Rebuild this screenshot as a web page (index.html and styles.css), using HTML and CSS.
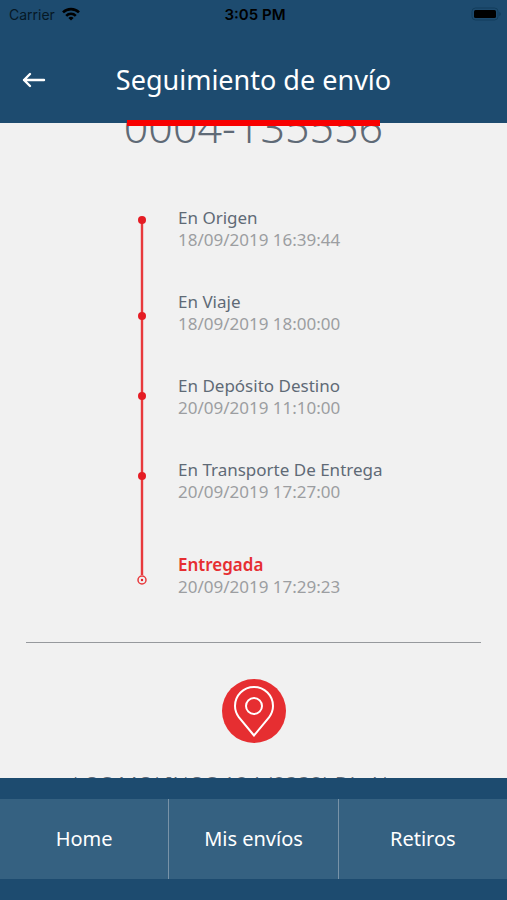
FILE: index.html
```html
<!DOCTYPE html>
<html lang="es">
<head>
<meta charset="utf-8">
<meta name="viewport" content="width=device-width, initial-scale=1">
<title>Seguimiento de envío</title>
<link rel="stylesheet" href="styles.css">
</head>
<body>
<header class="top">
  <div class="status">
    <span class="carrier">Carrier
      <svg width="18" height="14" viewBox="0 0 18 14" aria-hidden="true"><g fill="none" stroke="#000" stroke-width="2.6"><path d="M1 5.4a11.3 11.3 0 0 1 16 0"/><path d="M4.2 8.8a6.8 6.8 0 0 1 9.6 0"/></g><path d="M9 13.6 6.4 11a3.7 3.7 0 0 1 5.2 0z"/></svg>
    </span>
    <span class="clock">3:05 PM</span>
    <svg class="battery" width="30" height="14" viewBox="0 0 30 14" aria-hidden="true"><rect x="1" y="1" width="26" height="12" rx="3.5" fill="none" stroke="#123d5c"/><rect x="3" y="3" width="22" height="8" rx="1.5"/><path d="M28.3 5v4q1.5-.6 1.5-2t-1.5-2" fill="#123d5c"/></svg>
  </div>
  <div class="bar">
    <button class="back" type="button" aria-label="Volver">
      <svg width="24" height="16" viewBox="0 0 24 16" fill="none" stroke="#fff" stroke-width="2.4" stroke-linecap="round" stroke-linejoin="round"><path d="M22 8H2M8 2 2 8l6 6"/></svg>
    </button>
    <h1>Seguimiento de envío</h1>
  </div>
  <div class="marker"></div>
</header>
<main>
  <p class="number">0004-135556</p>
  <section class="tracking">
    <svg class="rail" width="12" height="372" viewBox="0 0 12 372" aria-hidden="true"><path d="M6 4v356" stroke="#e8393c" stroke-width="2.4"/><g fill="#e51c24"><circle cx="6" cy="5" r="4"/><circle cx="6" cy="101" r="4"/><circle cx="6" cy="181" r="4"/><circle cx="6" cy="261" r="4"/><circle cx="6" cy="365" r="1.2"/></g><circle cx="6" cy="365" r="4" fill="none" stroke="#e8393c" stroke-width="1.5"/></svg>
    <ol>
      <li><strong>En Origen</strong><time>18/09/2019 16:39:44</time></li>
      <li><strong>En Viaje</strong><time>18/09/2019 18:00:00</time></li>
      <li><strong>En Depósito Destino</strong><time>20/09/2019 11:10:00</time></li>
      <li><strong>En Transporte De Entrega</strong><time>20/09/2019 17:27:00</time></li>
      <li class="done"><strong>Entregada</strong><time>20/09/2019 17:29:23</time></li>
    </ol>
  </section>
  <hr>
  <section class="place">
    <svg width="64" height="64" viewBox="0 0 64 64" aria-hidden="true"><circle cx="32" cy="32" r="32" fill="#e62e31"/><g fill="none" stroke="#fff" stroke-width="2"><path d="M32 56.5 17 38.5C14.5 35 13 31.5 13 27a19 19 0 0 1 38 0c0 4.5-1.5 8-4 11.5z"/><circle cx="32" cy="27" r="8"/></g></svg>
    <p>LOS MOLINOS 124 (8332) Río Negro</p>
  </section>
</main>
<nav>
  <a href="#home">Home</a>
  <a href="#envios">Mis envíos</a>
  <a href="#retiros">Retiros</a>
</nav>
</body>
</html>
```

FILE: styles.css
```css
* { box-sizing: border-box; margin: 0; padding: 0; }
body {
  display: flex;
  flex-direction: column;
  height: 100vh;
  background: #f1f1f1;
  color: #5f6a76;
  font-family: "Noto Sans", sans-serif;
}
.top {
  position: relative;
  flex: none;
  padding-bottom: 23px;
  background: #1d4b6f;
}
.status {
  display: grid;
  grid-template-columns: 1fr auto 1fr;
  align-items: center;
  height: 28px;
  padding: 0 6px 0 9px;
  color: #000;
  font-family: Inter, sans-serif;
  font-size: 14px;
}
.carrier { display: flex; align-items: center; gap: 7px; color: #061825; }
.clock { font-size: 15px; font-weight: 600; }
.battery { justify-self: end; }
.bar {
  display: grid;
  grid-template-columns: 48px 1fr 48px;
  align-items: center;
  height: 72px;
  padding: 32px 10px 0;
}
.back {
  display: flex;
  justify-content: center;
  border: 0;
  background: none;
  cursor: pointer;
}
h1 {
  color: #fff;
  font-size: 27px;
  font-weight: 400;
  line-height: 40px;
  text-align: center;
}
.marker {
  position: absolute;
  bottom: -3px;
  left: 25%;
  width: 50%;
  height: 6px;
  background: #f80000;
}
main { flex: 1; min-height: 0; overflow: hidden; }
.number {
  margin-top: -27px;
  font-size: 43px;
  font-weight: 300;
  line-height: 62px;
  text-align: center;
}
.tracking {
  display: flex;
  align-items: flex-start;
  gap: 30px;
  margin-top: 49px;
  padding-left: 136px;
}
.rail { flex: none; margin-top: 8px; }
ol { list-style: none; }
li {
  display: flex;
  flex-direction: column;
  height: 84px;
  font-size: 17px;
  line-height: 22px;
}
li strong { font-weight: 400; }
li time { color: #9c9ea1; }
li.done { margin-top: 11px; }
.done strong { color: #e62e31; font-weight: 600; }
hr { margin: 4px 26px 0; border: 0; border-top: 1px solid #96999d; }
.place {
  display: flex;
  flex-direction: column;
  align-items: center;
  gap: 26px;
  padding-top: 36px;
}
.place p { font-size: 22px; font-weight: 300; line-height: 30px; white-space: nowrap; }
nav {
  display: flex;
  flex: none;
  padding: 21px 0;
  background: #1d4b6f;
}
nav a {
  display: flex;
  flex: 1;
  align-items: center;
  justify-content: center;
  height: 80px;
  padding-bottom: 2px;
  background: #356181;
  color: #fff;
  font-size: 20px;
  text-decoration: none;
}
nav a + a { border-left: 1px solid #7893a8; }
```
